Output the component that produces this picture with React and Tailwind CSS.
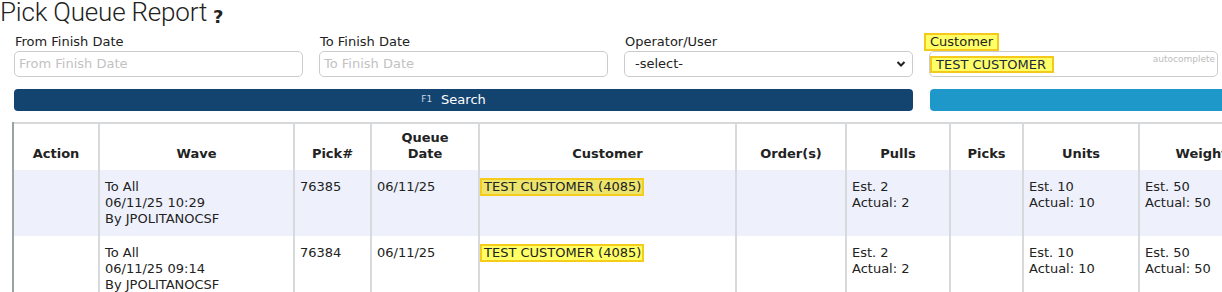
const rows = [
  { time: '06/11/25 10:29', pick: '76385', bg: 'bg-[#eef1fc]', hl: 'bg-[#ece46c]' },
  { time: '06/11/25 09:14', pick: '76384', bg: 'bg-white', hl: 'bg-[#ffff66]' },
];

const Field = ({ label, placeholder }) => (
  <div className="flex flex-col">
    <label className="h-[19px] leading-[19px] pl-[1px] text-[#222]">{label}</label>
    <div className="h-[26px] rounded-[5px] border border-[#cccccc] bg-white px-[4px] leading-[24px] text-[#c2c2c2]">
      {placeholder}
    </div>
  </div>
);

const App = () => {
  return (
    <div className="w-[1222px] h-[292px] overflow-hidden bg-white text-[13px] text-[#222]" style={{ fontFamily: '"DejaVu Sans", Verdana, sans-serif' }}>
      <div className="w-[1260px]">
        <h1 className="h-[33px] flex items-start leading-[26px] -mt-[1px]">
          <span className="text-[26px] font-light text-[#222] tracking-[-0.2px]" style={{ fontFamily: 'Roboto, "Open Sans", sans-serif' }}>
            Pick Queue Report
          </span>
          <span className="ml-[6px] mt-[5px] text-[18px] font-bold text-[#222]">?</span>
        </h1>

        <div className="grid grid-cols-[289px_289px_289px_289px] gap-x-[16px] pl-[14px]">
          <Field label="From Finish Date" placeholder="From Finish Date" />
          <Field label="To Finish Date" placeholder="To Finish Date" />
          <div className="flex flex-col">
            <label className="h-[19px] leading-[19px] pl-[1px] text-[#222]">Operator/User</label>
            <div className="h-[26px] rounded-[5px] border border-[#cccccc] bg-white pl-[10px] pr-[6px] flex items-center justify-between">
              <span>-select-</span>
              <svg width="10" height="8" viewBox="0 0 10 8">
                <path d="M1.5 2 L5 5.5 L8.5 2" fill="none" stroke="#222" strokeWidth="2" />
              </svg>
            </div>
          </div>
          <div className="flex flex-col">
            <div className="h-[19px]">
              <span className="-ml-[5px] inline-block h-[18px] border-2 border-[#f5c81c] bg-[#ffff66] px-[4px] leading-[14px]">
                Customer
              </span>
            </div>
            <div className="relative h-[26px] rounded-[5px] border border-[#cccccc] bg-white flex items-center">
              <span className="inline-block h-[17px] border-2 border-[#f5c81c] bg-[#ffff66] pl-[4px] pr-[6px] leading-[13px] text-[#1b2740]">
                TEST CUSTOMER
              </span>
              <span className="absolute right-[2px] top-[2px] text-[9px] leading-[10px] text-[#bdbdbd]">autocomplete</span>
            </div>
          </div>
        </div>

        <div className="mt-[12px] flex pl-[14px] gap-[17px]">
          <button className="w-[899px] h-[22px] rounded-[4px] bg-[#134470] text-white flex items-center justify-center pr-[20px]">
            <span className="text-[9px] text-[#c9d6e3] mr-[9px]">F1</span>
            <span>Search</span>
          </button>
          <button className="w-[320px] h-[22px] rounded-[4px] bg-[#1e98c9]" />
        </div>

        <table className="mt-[11px] ml-[12px] table-fixed border-collapse w-[1250px]">
          <colgroup>
            <col className="w-[86px]" />
            <col className="w-[195px]" />
            <col className="w-[77px]" />
            <col className="w-[108px]" />
            <col className="w-[257px]" />
            <col className="w-[110px]" />
            <col className="w-[104px]" />
            <col className="w-[73px]" />
            <col className="w-[116px]" />
            <col className="w-[124px]" />
          </colgroup>
          <thead>
            <tr className="border-t-2 border-[#d6d8da] h-[47px]">
              {['Action', 'Wave', 'Pick#', 'Queue Date', 'Customer', 'Order(s)', 'Pulls', 'Picks', 'Units', 'Weight'].map((h, i) => (
                <th
                  key={h}
                  className={`align-bottom pb-[8px] text-center font-bold leading-[16px] border-l-2 ${
                    i === 0 ? 'border-[#9aa3a0]' : 'border-[#d6dadd]'
                  } ${h === 'Queue Date' ? 'px-[28px]' : 'px-[4px]'}`}
                >
                  {h}
                </th>
              ))}
            </tr>
          </thead>
          <tbody>
            {rows.map((r) => (
              <tr key={r.pick} className={`${r.bg} h-[66px]`}>
                <td className="border-l-2 border-[#9aa3a0]" />
                <td className="border-l-2 border-[#d6dadd] align-top pt-[9px] px-[5px] leading-[16px]">
                  To All
                  <br />
                  {r.time}
                  <br />
                  By JPOLITANOCSF
                </td>
                <td className="border-l-2 border-[#d6dadd] align-top pt-[9px] px-[5px] leading-[16px]">{r.pick}</td>
                <td className="border-l-2 border-[#d6dadd] align-top pt-[9px] px-[5px] leading-[16px]">06/11/25</td>
                <td className="border-l-2 border-[#d6dadd] align-top pt-[8px] pl-0 leading-[16px]">
                  <span className={`inline-block h-[18px] border-2 border-[#f5cc1a] ${r.hl} pl-[2px] pr-[1px] leading-[14px]`}>
                    TEST CUSTOMER (4085)
                  </span>
                </td>
                <td className="border-l-2 border-[#d6dadd]" />
                <td className="border-l-2 border-[#d6dadd] align-top pt-[9px] px-[5px] leading-[16px]">
                  Est. 2
                  <br />
                  Actual: 2
                </td>
                <td className="border-l-2 border-[#d6dadd]" />
                <td className="border-l-2 border-[#d6dadd] align-top pt-[9px] px-[5px] leading-[16px]">
                  Est. 10
                  <br />
                  Actual: 10
                </td>
                <td className="border-l-2 border-[#d6dadd] align-top pt-[9px] px-[5px] leading-[16px]">
                  Est. 50
                  <br />
                  Actual: 50
                </td>
              </tr>
            ))}
          </tbody>
        </table>
      </div>
    </div>
  );
};

export default App;
